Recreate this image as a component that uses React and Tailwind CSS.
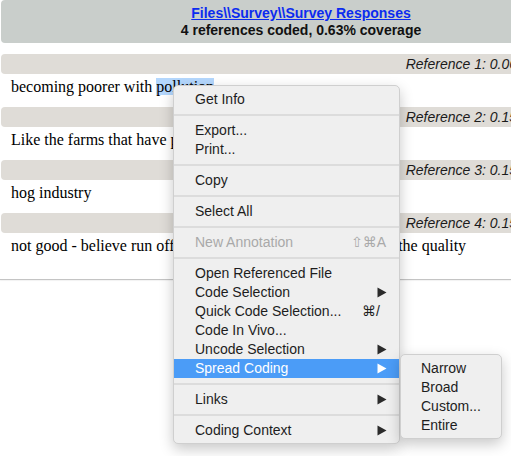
import React from "react";

const Arrow = ({ white }) => (
  <svg width="10" height="11" viewBox="0 0 10 11" className="shrink-0">
    <path d="M0.5 0.5 L9.5 5.5 L0.5 10.5 Z" fill={white ? "#ffffff" : "#2b2b2b"} />
  </svg>
);

const Sep = () => (
  <div className="h-[12px] flex items-center">
    <div className="h-[2px] w-full bg-[#dcdcdc]" />
  </div>
);

const Item = ({ label, arrow, shortcut, disabled, active, scPad }) => (
  <div
    className={
      "h-[19px] flex items-center pl-[21px] pr-[12px] " +
      (active ? "bg-[#4b9cf7] text-white" : disabled ? "text-[#a9a9a9]" : "text-[#1d1d1d]")
    }
  >
    <span className="flex-1 whitespace-nowrap">{label}</span>
    {shortcut && (
      <span className={"whitespace-nowrap " + (scPad ? "pr-[7px]" : "pr-[1px]")}>{shortcut}</span>
    )}
    {arrow && <Arrow white={active} />}
  </div>
);

const RefBar = ({ text }) => (
  <div className="w-[600px] h-[20px] bg-[#dfdcd7] rounded-[4px] flex items-center justify-end pr-[7px] italic text-[14px] text-[#1b1b1b] font-['Liberation_Sans',sans-serif] whitespace-nowrap">
    {text}
  </div>
);

const Body = ({ children, last }) => (
  <div
    className={
      "pl-[10px] pt-[3px] leading-[20px] text-[16px] text-black font-['Liberation_Serif',serif] whitespace-nowrap " +
      (last ? "h-[46px]" : "h-[33px]")
    }
  >
    {children}
  </div>
);

export default function App() {
  return (
    <div className="relative w-[511px] h-[456px] overflow-hidden bg-white">
      <div className="pl-[1px]">
        <div className="w-[600px] h-[43px] bg-[#c9cecb] rounded-[4px] flex flex-col items-center pt-[5px] font-['Liberation_Sans',sans-serif] font-bold text-[14px] leading-[17px] text-[#111]">
          <a href="#" className="text-[#0b2bf0] underline">
            Files\\Survey\\Survey Responses
          </a>
          <div>4 references coded, 0.63% coverage</div>
        </div>
        <div className="h-[11px]" />
        <RefBar text="Reference 1: 0.06% Coverage" />
        <Body>
          becoming poorer with <span className="bg-[#b4d7fd]">pollution</span>
        </Body>
        <RefBar text="Reference 2: 0.15% Coverage" />
        <Body>Like the farms that have polluted the water</Body>
        <RefBar text="Reference 3: 0.15% Coverage" />
        <Body>hog industry</Body>
        <RefBar text="Reference 4: 0.15% Coverage" />
        <Body last>
          not good - believe run off from the hog farms has decreased the quality
        </Body>
      </div>
      <div className="h-[1px] w-full bg-[#c4c4c4] shadow-[0_1px_1px_rgba(0,0,0,0.06)]" />

      <div className="absolute left-[173px] top-[85px] w-[227px] pt-[4px] pb-[3px] bg-[#efefef] rounded-[5px] border border-[#cfcfcf] shadow-[0_5px_14px_rgba(0,0,0,0.22)] font-['Liberation_Sans','DejaVu_Sans',sans-serif] text-[14px]">
        <Item label="Get Info" />
        <Sep />
        <Item label="Export..." />
        <Item label="Print..." />
        <Sep />
        <Item label="Copy" />
        <Sep />
        <Item label="Select All" />
        <Sep />
        <Item label="New Annotation" disabled shortcut="⇧⌘A" />
        <Sep />
        <Item label="Open Referenced File" />
        <Item label="Code Selection" arrow />
        <Item label="Quick Code Selection..." shortcut="⌘/" scPad />
        <Item label="Code In Vivo..." />
        <Item label="Uncode Selection" arrow />
        <Item label="Spread Coding" arrow active />
        <Sep />
        <Item label="Links" arrow />
        <Sep />
        <Item label="Coding Context" arrow />
      </div>

      <div className="absolute left-[400px] top-[354px] w-[102px] pt-[4px] pb-[3px] bg-[#efefef] rounded-[5px] border border-[#cfcfcf] shadow-[0_5px_14px_rgba(0,0,0,0.22)] font-['Liberation_Sans',sans-serif] text-[14px] text-[#1d1d1d]">
        {["Narrow", "Broad", "Custom...", "Entire"].map((t) => (
          <div key={t} className="h-[19px] flex items-center pl-[20px]">
            {t}
          </div>
        ))}
      </div>
    </div>
  );
}
